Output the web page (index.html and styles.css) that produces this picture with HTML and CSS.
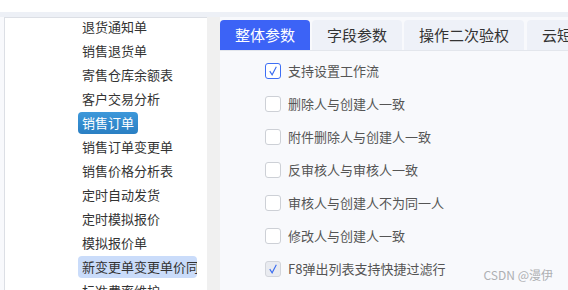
FILE: index.html
```html
<!DOCTYPE html>
<html lang="zh-CN">
<head>
  <meta charset="UTF-8">
  <title>参数设置</title>
  <link rel="stylesheet" href="styles.css">
</head>
<body>

  <div class="topbar"></div>
  <div class="band"></div>

  <div class="main">
    <!-- 左侧菜单 -->
    <aside class="sidebar">
      <ul class="menu">
        <li><span>退货通知单</span></li>
        <li><span>销售退货单</span></li>
        <li><span>寄售仓库余额表</span></li>
        <li><span>客户交易分析</span></li>
        <li><span class="active">销售订单</span></li>
        <li><span>销售订单变更单</span></li>
        <li><span>销售价格分析表</span></li>
        <li><span>定时自动发货</span></li>
        <li><span>定时模拟报价</span></li>
        <li><span>模拟报价单</span></li>
        <li><span class="hover">新变更单变更单价同步</span></li>
        <li><span>标准费率维护</span></li>
      </ul>
    </aside>

    <div class="gutter"></div>

    <!-- 参数面板 -->
    <section class="panel">
      <div class="tabs">
        <div class="tab current">整体参数</div>
        <div class="tab">字段参数</div>
        <div class="tab">操作二次验权</div>
        <div class="tab">云短信</div>
      </div>

      <div class="options">
        <label class="option"><span class="box checked"><svg viewBox="0 0 16 16"><polyline points="4.3,8.2 7,12.3 11.8,3.2"/></svg></span>支持设置工作流</label>
        <label class="option"><span class="box"></span>删除人与创建人一致</label>
        <label class="option"><span class="box"></span>附件删除人与创建人一致</label>
        <label class="option"><span class="box"></span>反审核人与审核人一致</label>
        <label class="option"><span class="box"></span>审核人与创建人不为同一人</label>
        <label class="option"><span class="box"></span>修改人与创建人一致</label>
        <label class="option"><span class="box disabled"><svg viewBox="0 0 16 16"><polyline points="4.3,8.2 7,12.3 11.8,3.2"/></svg></span>F8弹出列表支持快捷过滤行</label>
      </div>

      <div class="watermark">CSDN @漫伊</div>
    </section>
  </div>

</body>
</html>
```

FILE: styles.css
```css
/* Global Styles */
* {
  margin: 0;
  padding: 0;
  box-sizing: border-box;
}

html, body {
  height: 100%;
  overflow: hidden;
}

body {
  font-family: "Noto Sans CJK SC", "Noto Sans", sans-serif;
  background: #f8f9fc;
  color: #333;
  display: flex;
  flex-direction: column;
}

.topbar {
  height: 12px;
  background: #fff;
}

.band {
  height: 5px;
  background: #edf0f6;
}

.main {
  flex: 1;
  display: flex;
  min-height: 0;
  padding-left: 4px;
}

/* Sidebar */
.sidebar {
  width: 203px;
  background: #fff;
  border-left: 1px solid #dcdfe5;
  border-top: 1px solid #dcdfe5;
  overflow: hidden;
}

.menu {
  list-style: none;
  margin-top: -3px;
  padding: 0 10px 0 73px;
}

.menu li {
  height: 24px;
  padding: 1px 0;
  font-size: 13px;
  line-height: 22px;
  white-space: nowrap;
}

.menu li span {
  display: inline-block;
  max-width: 100%;
  overflow: hidden;
  padding: 0 4px;
  border-radius: 4px;
}

.menu li span.active {
  background: linear-gradient(#3d98da, #2a7fc3);
  color: #fff;
}

.menu li span.hover {
  background: #cadcfa;
}

.gutter {
  width: 13px;
  background: #f0f0f0;
}

/* Panel */
.panel {
  flex: 1;
  position: relative;
  background: #f8f9fc;
  padding-top: 3px;
  min-width: 0;
}

.tabs {
  display: flex;
  gap: 2px;
  height: 31px;
  border-bottom: 1px solid #e3e6ec;
  overflow: hidden;
  white-space: nowrap;
}

.tab {
  flex-shrink: 0;
  height: 30px;
  padding: 0 15px;
  line-height: 30px;
  font-size: 15px;
  background: #eef1f8;
  border-radius: 4px 4px 0 0;
  color: #333;
}

.tab.current {
  background: #3c63f6;
  color: #fff;
}

.tab:nth-child(4) {
  margin-left: 1px;
}

.options {
  padding: 3px 0 0 45px;
}

.option {
  display: flex;
  align-items: center;
  height: 33px;
  font-size: 13px;
  color: #555;
}

.box {
  width: 16px;
  height: 16px;
  margin-right: 7px;
  border: 1px solid #cdd0d6;
  border-radius: 3px;
  background: #fff;
}

.box svg {
  display: block;
  width: 14px;
  height: 14px;
  fill: none;
  stroke: #3a6cf0;
  stroke-width: 1.3;
}

.box.checked {
  border-color: #3d6ef5;
}

.box.disabled {
  background: #e9ebf0;
  border-color: #d2d5db;
}

.watermark {
  position: absolute;
  right: 15px;
  bottom: 7px;
  font-size: 12px;
  color: #aeb0b3;
}
```
